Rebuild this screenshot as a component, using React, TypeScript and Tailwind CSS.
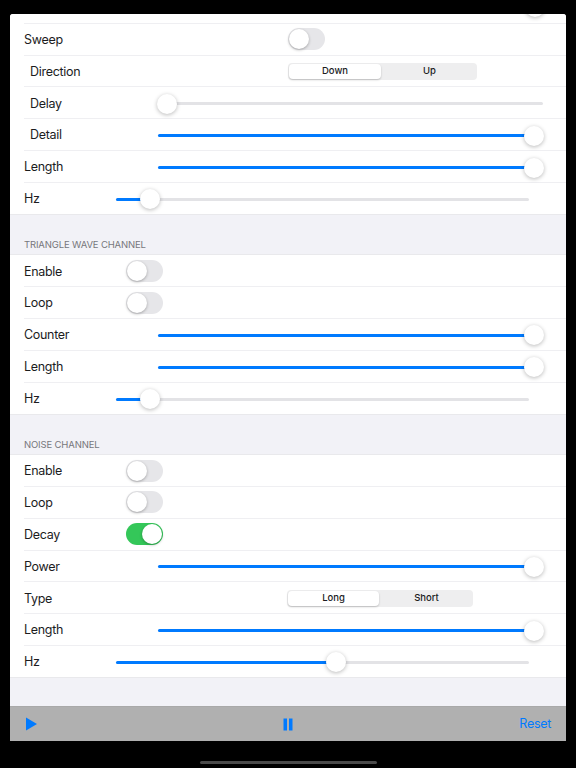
function Row({ label, labelWidth, indent, children }: { label: string; labelWidth: string; indent?: boolean; children?: React.ReactNode }) {
  return (
    <div className="ml-[14px] flex h-[31.83px] items-center border-b border-[#efeff2]">
      <span className={`shrink-0 pt-[2px] text-[12.5px] leading-none tracking-[-0.3px] text-[#1c1c1e] ${labelWidth} ${indent ? 'pl-[6px]' : ''}`}>
        {label}
      </span>
      {children}
    </div>
  );
}

function Toggle({ on }: { on?: boolean }) {
  return (
    <div className={`flex h-[22px] w-[37px] items-center rounded-full ${on ? 'justify-end bg-[#34c759]' : 'bg-[#e6e6e9]'}`}>
      <div className="m-[1px] h-[20px] w-[20px] rounded-full bg-white shadow-[0_1px_3px_rgba(0,0,0,0.3)]" />
    </div>
  );
}

function Slider({ value, short }: { value: number; short?: boolean }) {
  return (
    <div className={`relative mt-[2px] h-[3px] flex-1 rounded-full bg-[#e3e3e6] ${short ? 'mr-[37px]' : 'mr-[23px]'}`}>
      <div className="h-full rounded-full bg-[#007aff]" style={{ width: `${value}%` }} />
      <div
        className="absolute top-[-8.5px] h-[20px] w-[20px] -translate-x-1/2 rounded-full bg-white shadow-[0_1px_4px_rgba(0,0,0,0.28)]"
        style={{ left: `${value}%` }}
      />
    </div>
  );
}

function Segmented({ items, width, activeWidth, active }: { items: string[]; width: string; activeWidth: string; active: string }) {
  return (
    <div className={`mt-[1px] flex h-[17px] rounded-[4px] bg-[#eeeeef] ${width}`}>
      {items.map((item) => (
        <div
          key={item}
          className={`flex items-center justify-center rounded-[4px] text-[9.5px] font-medium text-[#1c1c1e] ${item === active ? `m-[1px] shrink-0 bg-white shadow-[0_1px_2px_rgba(0,0,0,0.22)] ${activeWidth}` : 'flex-1'}`}
        >
          {item}
        </div>
      ))}
    </div>
  );
}

function Section({ title }: { title: string }) {
  return (
    <div className="-mt-[1px] flex h-[41.6px] items-end border-y border-[#e9e9ec] bg-[#f2f2f7] px-[14px] pb-[5px] text-[9.5px] leading-none tracking-[-0.15px] text-[#77777c]">
      {title}
    </div>
  );
}

export default function App() {
  return (
    <div className="h-[768px] w-[576px] bg-black px-[10px] pt-[14px] [font-family:Inter,'Liberation_Sans',sans-serif]">
      <div className="flex h-[727px] flex-col overflow-hidden rounded-t-[3px] bg-[#f2f2f7]">
        <div className="flex-1 overflow-hidden">
          <div className="relative h-[9.8px] bg-white">
            <div className="ml-[14px] h-full border-b border-[#efeff2]" />
            <div className="absolute left-[515px] top-[-17px] h-[20px] w-[20px] rounded-full bg-white shadow-[0_1px_4px_rgba(0,0,0,0.28)]" />
          </div>

          <div className="bg-white">
            <Row label="Sweep" labelWidth="w-[264px]">
              <Toggle />
            </Row>
            <Row label="Direction" labelWidth="w-[264px]" indent>
              <Segmented items={['Down', 'Up']} active="Down" width="w-[189px]" activeWidth="w-[92px]" />
            </Row>
            <Row label="Delay" labelWidth="w-[134px]" indent>
              <Slider value={2.3} />
            </Row>
            <Row label="Detail" labelWidth="w-[134px]" indent>
              <Slider value={97.7} />
            </Row>
            <Row label="Length" labelWidth="w-[134px]">
              <Slider value={97.7} />
            </Row>
            <Row label="Hz" labelWidth="w-[92px]">
              <Slider value={8.2} short />
            </Row>
          </div>

          <Section title="TRIANGLE WAVE CHANNEL" />

          <div className="bg-white">
            <Row label="Enable" labelWidth="w-[102px]">
              <Toggle />
            </Row>
            <Row label="Loop" labelWidth="w-[102px]">
              <Toggle />
            </Row>
            <Row label="Counter" labelWidth="w-[134px]">
              <Slider value={97.7} />
            </Row>
            <Row label="Length" labelWidth="w-[134px]">
              <Slider value={97.7} />
            </Row>
            <Row label="Hz" labelWidth="w-[92px]">
              <Slider value={8.2} short />
            </Row>
          </div>

          <Section title="NOISE CHANNEL" />

          <div className="bg-white">
            <Row label="Enable" labelWidth="w-[102px]">
              <Toggle />
            </Row>
            <Row label="Loop" labelWidth="w-[102px]">
              <Toggle />
            </Row>
            <Row label="Decay" labelWidth="w-[102px]">
              <Toggle on />
            </Row>
            <Row label="Power" labelWidth="w-[134px]">
              <Slider value={97.7} />
            </Row>
            <Row label="Type" labelWidth="w-[263px]">
              <Segmented items={['Long', 'Short']} active="Long" width="w-[186px]" activeWidth="w-[91px]" />
            </Row>
            <Row label="Length" labelWidth="w-[134px]">
              <Slider value={97.7} />
            </Row>
            <Row label="Hz" labelWidth="w-[92px]">
              <Slider value={53.3} short />
            </Row>
          </div>
          <div className="-mt-[1px] h-[1px] bg-[#e9e9ec]" />
        </div>

        <div className="grid h-[35px] grid-cols-3 items-center border-t border-[#a9a9a9] bg-[#b0b0b0] px-[15px]">
          <svg width="13" height="14" viewBox="0 0 13 14">
            <path d="M1 0.5 L12 7 L1 13.5 Z" fill="#007aff" />
          </svg>
          <svg className="justify-self-center" width="10" height="13" viewBox="0 0 10 13">
            <rect x="0.5" y="0.5" width="3.5" height="12" fill="#007aff" />
            <rect x="6" y="0.5" width="3.5" height="12" fill="#007aff" />
          </svg>
          <span className="justify-self-end text-[12.5px] leading-none tracking-[-0.3px] text-[#007aff]">Reset</span>
        </div>
      </div>

      <div className="mx-auto mt-[20px] h-[3px] w-[177px] rounded-full bg-[#4a4a4a]" />
    </div>
  );
}
